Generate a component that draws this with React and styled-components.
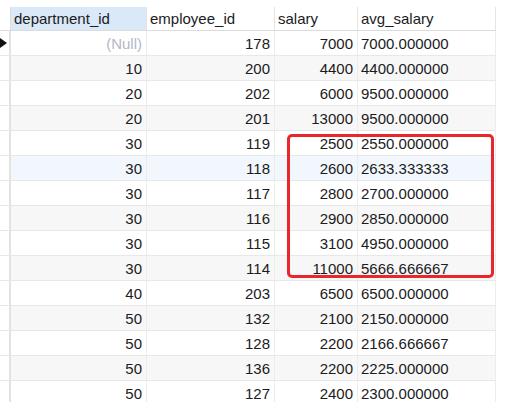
import React from 'react';
import styled, { createGlobalStyle } from 'styled-components';

const GlobalStyle = createGlobalStyle`
  html, body {
    margin: 0;
    padding: 0;
    background: #ffffff;
  }
  body {
    font-family: "Liberation Sans", Arial, sans-serif;
    font-size: 15px;
    color: #1b1b22;
  }
`;

const Page = styled.div`
  position: relative;
  width: 505px;
  height: 402px;
  overflow: hidden;
  padding-top: 7px;
  box-sizing: border-box;
`;

const Grid = styled.div`
  display: grid;
  grid-template-columns: 11px 136px 128px 83px 138px;
  width: 496px;
`;

const HeadCell = styled.div`
  height: 24px;
  line-height: 24px;
  padding: 0 3px;
  box-sizing: border-box;
  background: ${props => props.active ? '#d9e9f8' : '#ffffff'};
  border-right: 1px solid #e4e4e4;
  border-bottom: 1px solid #dcdcdc;
  white-space: nowrap;
  overflow: hidden;
`;

const Corner = styled.div`
  height: 24px;
  box-sizing: border-box;
  border-right: 1px solid #dcdcdc;
  border-bottom: 1px solid #dcdcdc;
  background: #ffffff;
`;

const Marker = styled.div`
  height: 25px;
  box-sizing: border-box;
  border-right: 2px solid #e2e2e2;
  border-bottom: 1px solid #e8e8e8;
  background: #ffffff;
  display: flex;
  align-items: center;
`;

const Arrow = styled.div`
  width: 0;
  height: 0;
  border-top: 5px solid transparent;
  border-bottom: 5px solid transparent;
  border-left: 7px solid #111111;
`;

const Cell = styled.div`
  height: 25px;
  line-height: 25px;
  padding: 0 4px 0 3px;
  box-sizing: border-box;
  background: ${props => props.bg};
  border-right: 1px solid #ececec;
  border-bottom: 1px solid #e8e8e8;
  text-align: ${props => props.left ? 'left' : 'right'};
  color: ${props => props.muted ? '#b4b6ca' : '#1b1b22'};
  white-space: nowrap;
  overflow: hidden;
`;

const Highlight = styled.div`
  position: absolute;
  left: 287px;
  top: 134px;
  width: 207px;
  height: 144px;
  box-sizing: border-box;
  border: 3px solid #e8262b;
  border-radius: 5px;
`;

const rows = [
  [null, 178, 7000, '7000.000000'],
  [10, 200, 4400, '4400.000000'],
  [20, 202, 6000, '9500.000000'],
  [20, 201, 13000, '9500.000000'],
  [30, 119, 2500, '2550.000000'],
  [30, 118, 2600, '2633.333333'],
  [30, 117, 2800, '2700.000000'],
  [30, 116, 2900, '2850.000000'],
  [30, 115, 3100, '4950.000000'],
  [30, 114, 11000, '5666.666667'],
  [40, 203, 6500, '6500.000000'],
  [50, 132, 2100, '2150.000000'],
  [50, 128, 2200, '2166.666667'],
  [50, 136, 2200, '2225.000000'],
  [50, 127, 2400, '2300.000000'],
];

const rowColor = (i) => {
  if (i === 5) return '#f1f7fd';
  return i % 2 === 0 ? '#ffffff' : '#f7f7f7';
};

const App = () => {
  return (
    <Page>
      <GlobalStyle />
      <Grid>
        <Corner />
        <HeadCell active>department_id</HeadCell>
        <HeadCell>employee_id</HeadCell>
        <HeadCell>salary</HeadCell>
        <HeadCell>avg_salary</HeadCell>
        {rows.map((r, i) => (
          <React.Fragment key={i}>
            <Marker>{i === 0 && <Arrow />}</Marker>
            <Cell bg={rowColor(i)} muted={r[0] === null}>
              {r[0] === null ? '(Null)' : r[0]}
            </Cell>
            <Cell bg={rowColor(i)}>{r[1]}</Cell>
            <Cell bg={rowColor(i)}>{r[2]}</Cell>
            <Cell bg={rowColor(i)} left>{r[3]}</Cell>
          </React.Fragment>
        ))}
      </Grid>
      <Highlight />
    </Page>
  );
};

export default App;
